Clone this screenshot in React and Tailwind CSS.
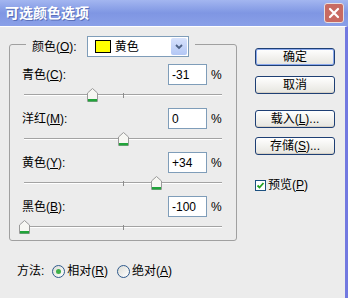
import React from 'react';

const FONT = { fontFamily: '"Liberation Sans", "Noto Sans CJK SC", sans-serif' };

// 带下划线助记符的标签
const Label = ({ text, k, after = '' }) => (
  <span className="whitespace-nowrap">
    {text}(<span className="underline">{k}</span>){after}
  </span>
);

const Slider = ({ value }) => {
  const left = ((value + 100) / 200) * 198 - 5.5;
  return (
    <div className="relative ml-[14px] mt-[3px] h-[14px] w-[198px]">
      <div className="absolute left-0 right-0 top-[6px] h-[1px] bg-[#a3a3a3]" />
      <div className="absolute left-0 right-0 top-[7px] h-[1px] bg-white" />
      <div className="absolute left-[99px] top-[5px] h-[5px] w-[1px] bg-[#8c8c8c]" />
      <svg className="absolute top-0" style={{ left }} width="11" height="14" viewBox="0 0 11 14">
        <path d="M0.5 5 L5.5 0.5 L10.5 5 L10.5 13.5 L0.5 13.5 Z" fill="#f7f7f3" stroke="#9a9a9a" />
        <rect x="1" y="11" width="9" height="2.5" fill="#21a43a" />
      </svg>
    </div>
  );
};

const Row = ({ label, k, value, num, first }) => (
  <div className={first ? '' : 'mt-[6px]'}>
    <div className="flex h-[21px] items-center pl-[12px]">
      <Label text={label} k={k} after=":" />
      <div className="ml-auto flex h-[21px] w-[39px] items-center border border-[#7f9db9] bg-white pl-[3px]">
        {value}
      </div>
      <span className="ml-[4px] mr-[15px] w-[10px]">%</span>
    </div>
    <Slider value={num} />
  </div>
);

const XPButton = ({ children, def }) => (
  <div
    className={
      'flex h-[18px] w-[80px] items-center justify-center rounded-[3px] border border-[#1e3f74] bg-gradient-to-b from-white to-[#e6e5df] ' +
      (def ? 'shadow-[inset_0_0_0_1px_#8aa8ec]' : 'shadow-[inset_0_-1px_0_#d6d0c5]')
    }
  >
    {children}
  </div>
);

const Radio = ({ on }) => (
  <div className="flex h-[13px] w-[13px] items-center justify-center rounded-full border border-[#2f5a8c] bg-gradient-to-br from-[#dcdcd6] to-white">
    {on && <div className="h-[5px] w-[5px] rounded-full bg-[#3fb04a]" />}
  </div>
);

export default function App() {
  const rows = [
    { label: '青色', k: 'C', value: '-31', num: -31 },
    { label: '洋红', k: 'M', value: '0', num: 0 },
    { label: '黄色', k: 'Y', value: '+34', num: 34 },
    { label: '黑色', k: 'B', value: '-100', num: -100 },
  ];

  return (
    <div className="flex h-[298px] w-[348px] flex-col text-[12px] text-black" style={FONT}>
      {/* 标题栏 */}
      <div className="flex h-[26px] items-center justify-between bg-gradient-to-b from-[#a3b6f0] via-[#7f96e3] to-[#8aa0e8] pl-[5px] pr-[4px]">
        <span className="text-[14px] font-bold text-white [text-shadow:1px_1px_0_#5a6fb8]">可选颜色选项</span>
        <div className="flex h-[20px] w-[20px] items-center justify-center rounded-[3px] border border-[#e8dede] bg-[#c86a62]">
          <svg width="12" height="12" viewBox="0 0 12 12">
            <path d="M2 2 L10 10 M10 2 L2 10" stroke="white" strokeWidth="2.2" strokeLinecap="round" />
          </svg>
        </div>
      </div>

      {/* 主体 */}
      <div className="flex flex-1 flex-col border-r-[3px] border-t border-[#7279e0] border-t-white bg-[#ececec]">
        <div className="flex">
          {/* 分组框 */}
          <div className="relative ml-[9px] mt-[17px] w-[228px] rounded-[3px] border border-[#a0a0a0] pb-[6px] pt-[19px]">
            <div className="absolute -top-[9px] left-[16px] flex items-center bg-[#ececec] px-[6px]">
              <Label text="颜色" k="O" after=":" />
              <div className="ml-[10px] flex h-[21px] w-[102px] items-center border border-[#7f9db9] bg-white">
                <div className="ml-[7px] h-[13px] w-[16px] border border-black bg-[#ffff00]" />
                <span className="ml-[4px]">黄色</span>
                <div className="ml-auto mr-[1px] flex h-[17px] w-[16px] items-center justify-center rounded-[2px] bg-gradient-to-b from-[#d7e2fc] to-[#b3c7f5]">
                  <svg width="8" height="6" viewBox="0 0 8 6">
                    <path d="M1 1 L4 4 L7 1" fill="none" stroke="#4d6185" strokeWidth="1.8" />
                  </svg>
                </div>
              </div>
            </div>
            {rows.map((r, i) => (
              <Row key={r.k} {...r} first={i === 0} />
            ))}
          </div>

          {/* 右侧按钮 */}
          <div className="ml-[18px] mt-[21px] flex flex-col">
            <XPButton def>确定</XPButton>
            <div className="mt-[10px]">
              <XPButton>取消</XPButton>
            </div>
            <div className="mt-[16px]">
              <XPButton>
                <Label text="载入" k="L" after="..." />
              </XPButton>
            </div>
            <div className="mt-[9px]">
              <XPButton>
                <Label text="存储" k="S" after="..." />
              </XPButton>
            </div>
            <div className="mt-[21px] flex items-center">
              <div className="flex h-[11px] w-[11px] items-center justify-center border border-[#1c5180] bg-white">
                <svg width="9" height="9" viewBox="0 0 9 9">
                  <path d="M1.5 4.5 L3.5 6.5 L7.5 2" fill="none" stroke="#21a121" strokeWidth="1.8" />
                </svg>
              </div>
              <span className="ml-[2px]">
                <Label text="预览" k="P" />
              </span>
            </div>
          </div>
        </div>

        {/* 方法 */}
        <div className="ml-[17px] mt-[22px] flex h-[16px] items-center">
          <span>方法:</span>
          <div className="ml-[8px]">
            <Radio on />
          </div>
          <span className="ml-[2px]">
            <Label text="相对" k="R" />
          </span>
          <div className="ml-[9px]">
            <Radio />
          </div>
          <span className="ml-[2px]">
            <Label text="绝对" k="A" />
          </span>
        </div>
      </div>
    </div>
  );
}
